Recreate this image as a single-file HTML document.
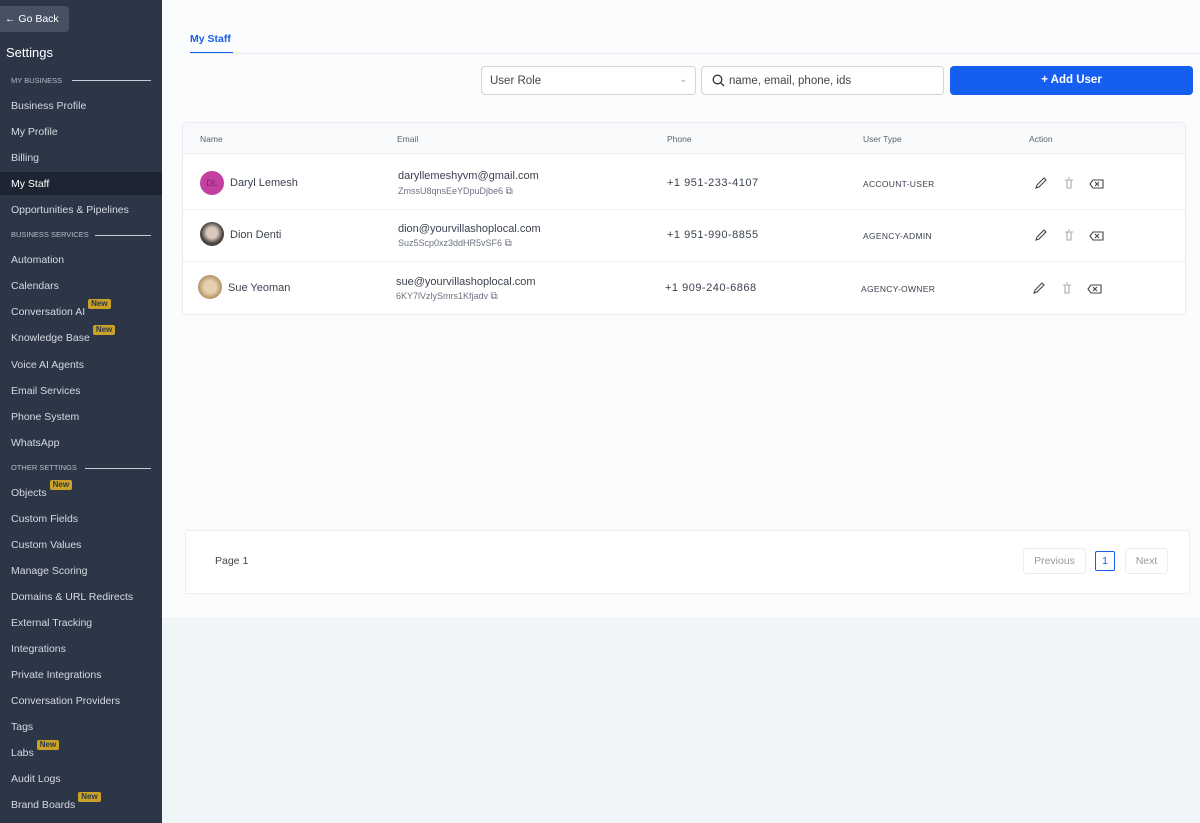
<!DOCTYPE html>
<html><head><meta charset="utf-8"><style>
*{box-sizing:border-box;margin:0;padding:0}
body{width:1200px;height:823px;overflow:hidden;font-family:"Liberation Sans",sans-serif;background:#f0f5f8;position:relative}
.sb{position:absolute;left:0;top:0;width:162px;height:823px;background:#2c3646}
.a{position:absolute}
.it{position:absolute;left:11px;font-size:10.5px;color:#d5dae2;line-height:14px;white-space:nowrap}
.sec{position:absolute;left:11px;font-size:7.5px;color:#b4bcc8;line-height:10px}
.ln{position:absolute;height:1px;background:#c9ced6;right:11px}
.new{display:inline-block;background:#c9a227;color:#2c3646;font-size:8px;line-height:10px;padding:0 3px;border-radius:2px;vertical-align:top;margin-top:-6px;margin-left:3px;font-weight:bold}
.main{position:absolute;left:162px;top:0;width:1038px;height:617px;background:#fbfcfd}
.hd{font-size:8.5px;color:#5c6370}
.t{position:absolute;font-size:11px;color:#3b4250}
.s{position:absolute;font-size:9px;color:#6b7280}
.ut{position:absolute;font-size:8.5px;color:#3b4250;letter-spacing:.3px}
.av{position:absolute;width:24px;height:24px;border-radius:50%}
</style></head><body>
<div class="sb">
<div class="a" style="left:0;top:6px;width:69px;height:26px;background:#465163;border-radius:0 4px 4px 0;color:#fff;font-size:10.5px;line-height:26px;padding-left:5px">← Go Back</div>
<div class="a" style="left:6px;top:45px;color:#fff;font-size:13px">Settings</div>
<div class="sec" style="top:76px">MY BUSINESS</div><div class="ln" style="left:72px;top:80px"></div>
<div class="it" style="top:99px">Business Profile</div>
<div class="it" style="top:125px">My Profile</div>
<div class="it" style="top:151px">Billing</div>
<div class="a" style="left:0;top:172px;width:162px;height:23px;background:#1e2532"></div>
<div class="it" style="top:177px;color:#fff">My Staff</div>
<div class="it" style="top:203px">Opportunities &amp; Pipelines</div>
<div class="sec" style="top:230px">BUSINESS SERVICES</div><div class="ln" style="left:95px;top:235px"></div>
<div class="it" style="top:253px">Automation</div>
<div class="it" style="top:279px">Calendars</div>
<div class="it" style="top:305px">Conversation AI<span class="new">New</span></div>
<div class="it" style="top:331px">Knowledge Base<span class="new">New</span></div>
<div class="it" style="top:358px">Voice AI Agents</div>
<div class="it" style="top:384px">Email Services</div>
<div class="it" style="top:410px">Phone System</div>
<div class="it" style="top:436px">WhatsApp</div>
<div class="sec" style="top:463px">OTHER SETTINGS</div><div class="ln" style="left:85px;top:468px"></div>
<div class="it" style="top:486px">Objects<span class="new">New</span></div>
<div class="it" style="top:512px">Custom Fields</div>
<div class="it" style="top:538px">Custom Values</div>
<div class="it" style="top:564px">Manage Scoring</div>
<div class="it" style="top:590px">Domains &amp; URL Redirects</div>
<div class="it" style="top:616px">External Tracking</div>
<div class="it" style="top:642px">Integrations</div>
<div class="it" style="top:668px">Private Integrations</div>
<div class="it" style="top:694px">Conversation Providers</div>
<div class="it" style="top:720px">Tags</div>
<div class="it" style="top:746px">Labs<span class="new">New</span></div>
<div class="it" style="top:772px">Audit Logs</div>
<div class="it" style="top:798px">Brand Boards<span class="new">New</span></div>
</div>
<div class="main"></div>
<div class="a" style="left:190px;top:33px;font-size:10.5px;color:#155eef;font-weight:bold">My Staff</div>
<div class="a" style="left:190px;top:52px;width:43px;height:2px;background:#155eef"></div>
<div class="a" style="left:190px;top:53px;width:1010px;height:1px;background:#eaecf0"></div>
<div class="a" style="left:481px;top:66px;width:215px;height:29px;border:1px solid #d0d5dd;border-radius:4px;background:#fff;font-size:11.5px;color:#444;line-height:28px;padding-left:8px">User Role<span style="position:absolute;right:8px;top:-2px;color:#999;font-size:9px">⌄</span></div>
<div class="a" style="left:701px;top:66px;width:243px;height:29px;border:1px solid #d0d5dd;border-radius:4px;background:#fff;font-size:11.5px;color:#444;line-height:28px;padding-left:27px">name, email, phone, ids
<svg style="position:absolute;left:10px;top:7px" width="13" height="13" viewBox="0 0 13 13"><circle cx="5.5" cy="5.5" r="4.3" fill="none" stroke="#333" stroke-width="1.3"/><path d="M8.7 8.7L12 12" stroke="#333" stroke-width="1.3"/></svg></div>
<div class="a" style="left:950px;top:66px;width:243px;height:29px;background:#155eef;border-radius:4px;color:#fff;font-size:11.5px;font-weight:bold;text-align:center;line-height:29px">+ Add User</div>
<div class="a" style="left:182px;top:122px;width:1004px;height:193px;border:1px solid #eaecf0;border-radius:3px;background:#fff"></div>
<div class="a" style="left:183px;top:123px;width:1002px;height:31px;background:#f8fafc;border-bottom:1px solid #eaecf0"></div>
<div class="a hd" style="left:200px;top:134px">Name</div>
<div class="a hd" style="left:397px;top:134px">Email</div>
<div class="a hd" style="left:667px;top:134px">Phone</div>
<div class="a hd" style="left:863px;top:134px">User Type</div>
<div class="a hd" style="left:1029px;top:134px">Action</div>

<div class="av" style="left:200px;top:171px;background:#c2409f;color:#8a2470;font-size:9px;text-align:center;line-height:24px">DL</div>
<div class="t" style="left:230px;top:177px">Daryl Lemesh</div>
<div class="t" style="left:398px;top:170px">daryllemeshyvm@gmail.com</div>
<div class="s" style="left:398px;top:186px">ZmssU8qnsEeYDpuDjbe6 <span style="font-size:10px">⧉</span></div>
<div class="t" style="left:667px;top:177px;letter-spacing:.5px">+1 951-233-4107</div>
<div class="ut" style="left:863px;top:179px">ACCOUNT-USER</div>

<div class="a" style="left:183px;top:209px;width:1002px;height:1px;background:#eef0f3"></div>
<div class="av" style="left:200px;top:222px;background:radial-gradient(circle at 50% 45%,#d9c8bb 30%,#4a4540 60%)"></div>
<div class="t" style="left:230px;top:229px">Dion Denti</div>
<div class="t" style="left:398px;top:223px">dion@yourvillashoplocal.com</div>
<div class="s" style="left:398px;top:238px">Suz5Scp0xz3ddHR5vSF6 <span style="font-size:10px">⧉</span></div>
<div class="t" style="left:667px;top:229px;letter-spacing:.5px">+1 951-990-8855</div>
<div class="ut" style="left:863px;top:231px">AGENCY-ADMIN</div>

<div class="a" style="left:183px;top:261px;width:1002px;height:1px;background:#eef0f3"></div>
<div class="av" style="left:198px;top:275px;background:radial-gradient(circle at 50% 50%,#e8cfb0 35%,#b89a6e 65%)"></div>
<div class="t" style="left:228px;top:282px">Sue Yeoman</div>
<div class="t" style="left:396px;top:276px">sue@yourvillashoplocal.com</div>
<div class="s" style="left:396px;top:291px">6KY7lVzlySmrs1Kfjadv <span style="font-size:10px">⧉</span></div>
<div class="t" style="left:665px;top:282px;letter-spacing:.5px">+1 909-240-6868</div>
<div class="ut" style="left:861px;top:284px">AGENCY-OWNER</div>

<svg class="a" style="left:1030px;top:172px" width="80" height="130" viewBox="0 0 80 130">
<g fill="none" stroke="#444" stroke-width="1.1">
<g id="r"><path d="M6 16l1-3 7-7 2 2-7 7z"/><path d="M35 8h8M37 8v8h4v-8M38 6h2" stroke="#aaa"/><path d="M63 8h10v8h-10l-3-4z M65 10l4 4M69 10l-4 4"/></g>
<use href="#r" y="52"/><use href="#r" x="-2" y="105"/>
</g></svg>

<div class="a" style="left:185px;top:530px;width:1005px;height:64px;background:#fff;border:1px solid #eaecf0;border-radius:3px"></div>
<div class="a" style="left:215px;top:555px;font-size:10.5px;color:#444">Page 1</div>
<div class="a" style="left:1023px;top:548px;width:63px;height:26px;border:1px solid #eaecf0;border-radius:4px;font-size:10.5px;color:#999;text-align:center;line-height:24px">Previous</div>
<div class="a" style="left:1095px;top:551px;width:20px;height:20px;border:1px solid #155eef;border-radius:2px;font-size:10.5px;color:#155eef;text-align:center;line-height:18px">1</div>
<div class="a" style="left:1125px;top:548px;width:43px;height:26px;border:1px solid #eaecf0;border-radius:4px;font-size:10.5px;color:#999;text-align:center;line-height:24px">Next</div>
</body></html>
